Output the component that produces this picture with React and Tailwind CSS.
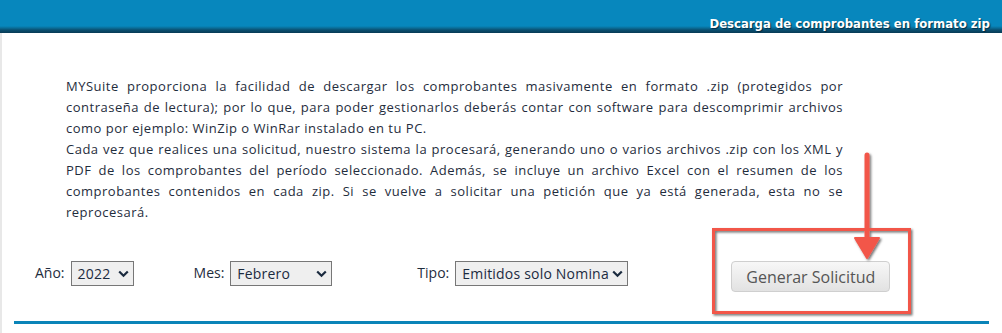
import React from 'react';

const Chevron = () => (
  <svg width="11" height="8" viewBox="0 0 11 8" className="shrink-0">
    <path d="M1.2 1.5 L5.5 5.8 L9.8 1.5" fill="none" stroke="#1b2b3f" strokeWidth="2.2" />
  </svg>
);

const Select = ({ value, width }) => (
  <div
    className={`flex items-center justify-between h-[25px] border border-[#777] bg-[#efefef] pl-[6px] pr-[4px] text-[14px] text-[#1b2b3f] ${width}`}
  >
    <span className="leading-none tracking-[0.2px] whitespace-nowrap">{value}</span>
    <Chevron />
  </div>
);

export default function App() {
  return (
    <div
      className="relative w-[1002px] h-[333px] bg-white overflow-hidden"
      style={{ fontFamily: '"Open Sans", "DejaVu Sans", sans-serif' }}
    >
      {/* Header */}
      <div className="h-[33px] bg-[linear-gradient(to_bottom,#0787bd_0px,#0787bd_26px,#0a6d98_28px,#0a4f70_30px,#083b55_33px)] flex justify-end pr-[12px]">
        <span
          className="mt-[16px] text-[13px] font-bold text-white leading-[15px] [text-shadow:1px_1px_1px_rgba(0,30,50,0.8)]"
          style={{ fontFamily: '"DejaVu Sans Condensed", "Liberation Sans Narrow", sans-serif' }}
        >
          Descarga de comprobantes en formato zip
        </span>
      </div>

      {/* Body */}
      <div className="h-[300px] border-l-2 border-[#e8e8e8] flex flex-col">
        <p className="ml-[64px] mt-[43px] w-[777px] text-[13px] leading-[21px] tracking-[0.5px] text-justify text-[#1f2d3d]">
          MYSuite proporciona la facilidad de descargar los comprobantes masivamente en formato .zip (protegidos por contraseña de lectura); por lo que, para poder gestionarlos deberás contar con software para descomprimir archivos como por ejemplo: WinZip o WinRar instalado en tu PC.
          <br />
          Cada vez que realices una solicitud, nuestro sistema la procesará, generando uno o varios archivos .zip con los XML y PDF de los comprobantes del período seleccionado. Además, se incluye un archivo Excel con el resumen de los comprobantes contenidos en cada zip. Si se vuelve a solicitar una petición que ya está generada, esta no se reprocesará.
        </p>

        <div className="flex items-start mt-[38px] ml-[33px] text-[14px] text-[#1f2d3d]">
          <span className="mt-[1px] mr-[6px]">Año:</span>
          <Select value="2022" width="w-[63px]" />
          <span className="ml-[60px] mt-[1px] mr-[6px]">Mes:</span>
          <Select value="Febrero" width="w-[102px]" />
          <span className="ml-[85px] mt-[1px] mr-[6px]">Tipo:</span>
          <Select value="Emitidos solo Nomina" width="w-[173px]" />
          <button className="ml-[103px] w-[159px] h-[31px] rounded-[4px] border border-[#cfcfcf] bg-[linear-gradient(to_bottom,#f7f7f7,#e2e2e2)] text-[16px] text-[#555]">
            Generar Solicitud
          </button>
        </div>

        <div className="mt-auto mb-[9px] ml-[12px] w-[975px] h-[3px] bg-[#0a84b8]" />
      </div>

      {/* Annotation overlay */}
      <svg className="absolute left-0 top-0 pointer-events-none" width="1002" height="333">
        <defs>
          <filter id="sh" x="-20%" y="-20%" width="140%" height="140%">
            <feDropShadow dx="1.5" dy="1.5" stdDeviation="1" floodColor="#000" floodOpacity="0.55" />
          </filter>
        </defs>
        <g filter="url(#sh)">
          <rect x="713.5" y="229.5" width="196" height="83" fill="none" stroke="#f2574a" strokeWidth="3" />
          <line x1="867" y1="155" x2="867" y2="242" stroke="#f2574a" strokeWidth="5" strokeLinecap="round" />
          <path d="M855 238 L879 238 L867 258 Z" fill="#f2574a" stroke="#f2574a" strokeWidth="2" strokeLinejoin="round" />
        </g>
      </svg>
    </div>
  );
}
